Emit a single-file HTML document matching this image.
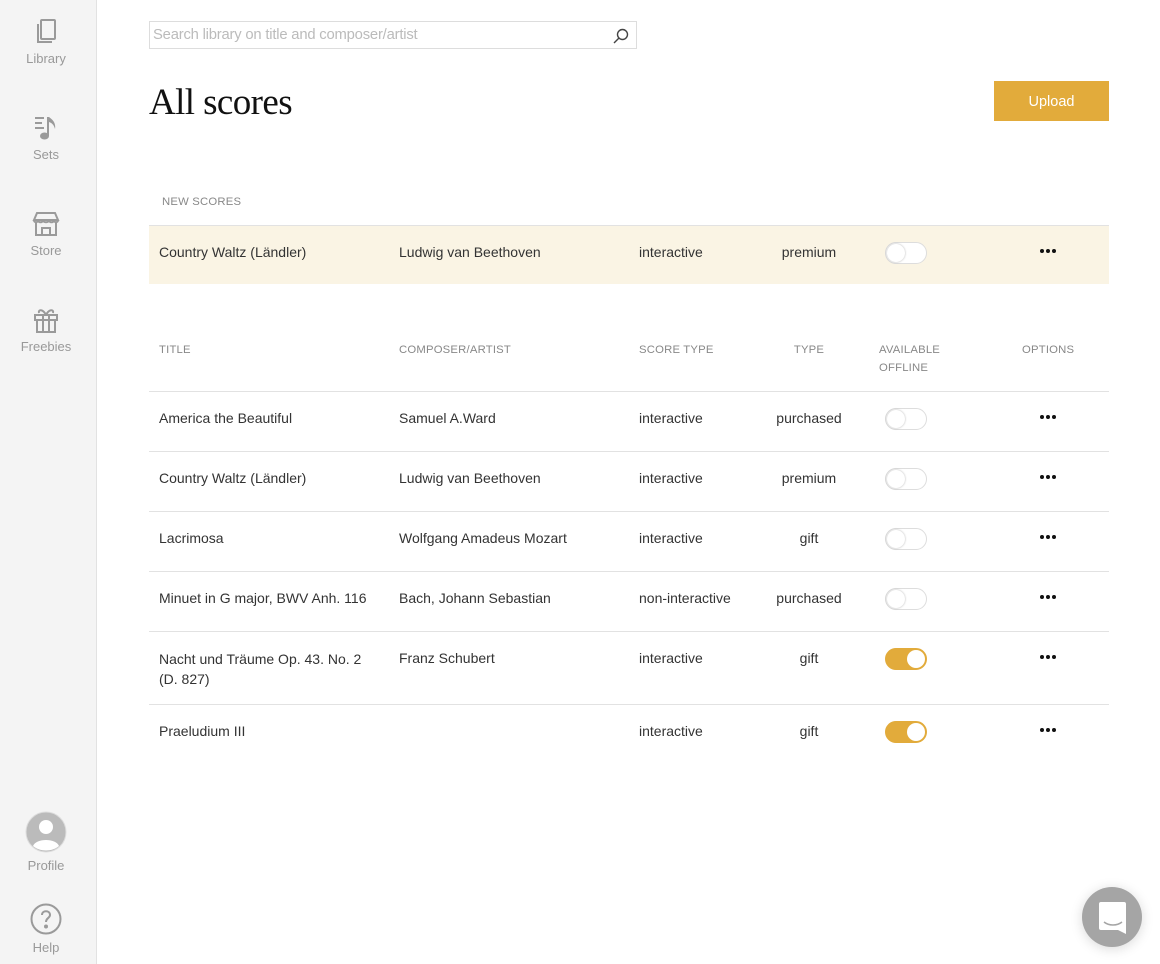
<!DOCTYPE html>
<html><head><meta charset="utf-8"><style>
*{box-sizing:border-box;margin:0;padding:0}
body{width:1160px;height:964px;background:#fff;font-family:"Liberation Sans",sans-serif;color:#333;position:relative;overflow:hidden}
.side{position:absolute;left:0;top:0;width:97px;height:964px;background:#f4f4f4;border-right:1px solid #e2e2e2}
.nav{position:absolute;left:0;width:92px;text-align:center;font-size:13px;color:#999}
.nav svg{display:block;margin:0 auto 5px}
.search{position:absolute;left:149px;top:21px;width:488px;height:28px;border:1px solid #ddd;font-size:14.8px;color:#bbb;padding:5px 3px;letter-spacing:-0.2px}
h1{position:absolute;left:149px;top:81px;font-family:"Liberation Serif",serif;font-weight:normal;font-size:37px;color:#111;letter-spacing:-0.6px}
.up{position:absolute;left:994px;top:81px;width:115px;height:40px;background:#e2ab3b;color:#fff;font-size:14.5px;text-align:center;line-height:42px}
.row{position:absolute;left:149px;width:960px;border-bottom:1px solid #e2e2e2;font-size:14px}
.row span{position:absolute}
.c1{left:10px}.c2{left:250px}.c3{left:490px}.c4{left:600px;width:120px;text-align:center}
.hd{font-size:11.3px;color:#888;letter-spacing:.2px}
.tg{position:absolute;left:736px;width:42px;height:22px;border-radius:11px;border:1px solid #ddd;background:#fff}
.tg::after{content:"";position:absolute;left:1px;top:1px;width:18px;height:18px;border-radius:50%;background:#fff;box-shadow:0 0 2px rgba(0,0,0,.3)}
.tg.on{background:#e2ab3b;border-color:#e2ab3b}
.tg.on::after{left:21px;box-shadow:none}
.dots{position:absolute;left:891px;width:16px;height:4px}
.dots::before{content:"";position:absolute;left:0;top:0;width:4px;height:4px;border-radius:50%;background:#111;box-shadow:6px 0 0 #111,12px 0 0 #111}
</style></head><body>
<div class="side">
<div class="nav" style="top:18px"><svg width="26" height="28" viewBox="0 0 26 28" fill="none" stroke="#9a9a9a" stroke-width="2"><rect x="8" y="2" width="14" height="19" rx="1"/><path d="M5 6v18h14"/></svg>Library</div>
<div class="nav" style="top:114px"><svg width="28" height="28" viewBox="0 0 28 28" fill="#9a9a9a"><rect x="3" y="3" width="9" height="2"/><rect x="3" y="8" width="7" height="2"/><rect x="3" y="13" width="9" height="2"/><rect x="15" y="3" width="2" height="19"/><path d="M17 3c4 3 7 6 6 12c-1-4-3-6-6-7z"/><ellipse cx="12.5" cy="22" rx="4.5" ry="3.5"/></svg>Sets</div>
<div class="nav" style="top:210px"><svg width="28" height="28" viewBox="0 0 28 28" fill="none" stroke="#9a9a9a" stroke-width="2"><path d="M5 3h18l3 7H2z"/><path d="M2 10c0 3 4 3 4 0c0 3 5 3 5 0c0 3 6 3 6 0c0 3 5 3 5 0c0 3 4 3 4 0"/><path d="M4 12v13h20V12M10 25v-7h8v7"/></svg>Store</div>
<div class="nav" style="top:306px"><svg width="28" height="28" viewBox="0 0 28 28" fill="none" stroke="#9a9a9a" stroke-width="2"><rect x="3" y="9" width="22" height="5"/><path d="M5 14v12h18V14M11 9v17M17 9v17"/><path d="M14 9c-3-6-8-6-7-2M14 9c3-6 8-6 7-2"/></svg>Freebies</div>
<div class="nav" style="top:811px"><svg width="42" height="42" viewBox="0 0 42 42"><circle cx="21" cy="21" r="20" fill="#bbb" stroke="#ddd" stroke-width="1"/><circle cx="21" cy="16" r="7" fill="#fff"/><path d="M8 35c3-8 23-8 26 0c-7 6-19 6-26 0z" fill="#fff"/></svg>Profile</div>
<div class="nav" style="top:903px"><svg width="32" height="32" viewBox="0 0 32 32" fill="none" stroke="#9a9a9a" stroke-width="2"><circle cx="16" cy="16" r="14.5"/><path d="M12 12c0-5 8-5 8 0c0 3-4 3-4 7"/><circle cx="16" cy="23.5" r="1" fill="#9a9a9a"/></svg>Help</div>
</div>
<div class="search">Search library on title and composer/artist<svg style="position:absolute;right:7px;top:6px" width="16" height="16" viewBox="0 0 16 16" fill="none" stroke="#444" stroke-width="1.4"><circle cx="9.5" cy="6.5" r="5"/><path d="M6 10l-5 5"/></svg></div>
<h1>All scores</h1>
<div class="up">Upload</div>
<div class="row hd" style="top:196px;height:30px"><span style="left:13px">NEW SCORES</span></div>
<div class="row" style="top:226px;height:58px;background:#faf4e4;border:none"><span class="c1" style="top:18px">Country Waltz (Ländler)</span><span class="c2" style="top:18px">Ludwig van Beethoven</span><span class="c3" style="top:18px">interactive</span><span class="c4" style="top:18px">premium</span><div class="tg" style="top:16px"></div><span class="dots" style="top:23px"></span></div>
<div class="row hd" style="top:344px;height:48px"><span class="c1">TITLE</span><span class="c2">COMPOSER/ARTIST</span><span class="c3">SCORE TYPE</span><span class="c4">TYPE</span><span style="left:730px;line-height:18px;top:-3px">AVAILABLE<br>OFFLINE</span><span style="left:873px">OPTIONS</span></div>

<div class="row" style="top:392px;height:60px"><span class="c1" style="top:18px">America the Beautiful</span><span class="c2" style="top:18px">Samuel A.Ward</span><span class="c3" style="top:18px">interactive</span><span class="c4" style="top:18px">purchased</span><div class="tg" style="top:16px"></div><span class="dots" style="top:23px"></span></div>
<div class="row" style="top:452px;height:60px"><span class="c1" style="top:18px">Country Waltz (Ländler)</span><span class="c2" style="top:18px">Ludwig van Beethoven</span><span class="c3" style="top:18px">interactive</span><span class="c4" style="top:18px">premium</span><div class="tg" style="top:16px"></div><span class="dots" style="top:23px"></span></div>
<div class="row" style="top:512px;height:60px"><span class="c1" style="top:18px">Lacrimosa</span><span class="c2" style="top:18px">Wolfgang Amadeus Mozart</span><span class="c3" style="top:18px">interactive</span><span class="c4" style="top:18px">gift</span><div class="tg" style="top:16px"></div><span class="dots" style="top:23px"></span></div>
<div class="row" style="top:572px;height:60px"><span class="c1" style="top:18px">Minuet in G major, BWV Anh. 116</span><span class="c2" style="top:18px">Bach, Johann Sebastian</span><span class="c3" style="top:18px">non-interactive</span><span class="c4" style="top:18px">purchased</span><div class="tg" style="top:16px"></div><span class="dots" style="top:23px"></span></div>
<div class="row" style="top:632px;height:73px"><span class="c1" style="top:17px;line-height:20px">Nacht und Träume Op. 43. No. 2<br>(D. 827)</span><span class="c2" style="top:18px">Franz Schubert</span><span class="c3" style="top:18px">interactive</span><span class="c4" style="top:18px">gift</span><div class="tg on" style="top:16px"></div><span class="dots" style="top:23px"></span></div>
<div class="row" style="top:705px;height:55px;border:none"><span class="c1" style="top:18px">Praeludium III</span><span class="c3" style="top:18px">interactive</span><span class="c4" style="top:18px">gift</span><div class="tg on" style="top:16px"></div><span class="dots" style="top:23px"></span></div>

<div style="position:absolute;left:1082px;top:887px;width:60px;height:60px;border-radius:50%;background:#a5a5a5;box-shadow:0 2px 12px rgba(0,0,0,.15)"><svg style="position:absolute;left:16px;top:15px" width="30" height="32" viewBox="0 0 30 32"><path d="M3 0h23a2 2 0 0 1 2 2v30l-8-4H3a2 2 0 0 1-2-2V2a2 2 0 0 1 2-2z" fill="#fff"/><path d="M6 20c5 4 13 4 18 0" stroke="#a5a5a5" stroke-width="1.5" fill="none"/></svg></div>
</body></html>
